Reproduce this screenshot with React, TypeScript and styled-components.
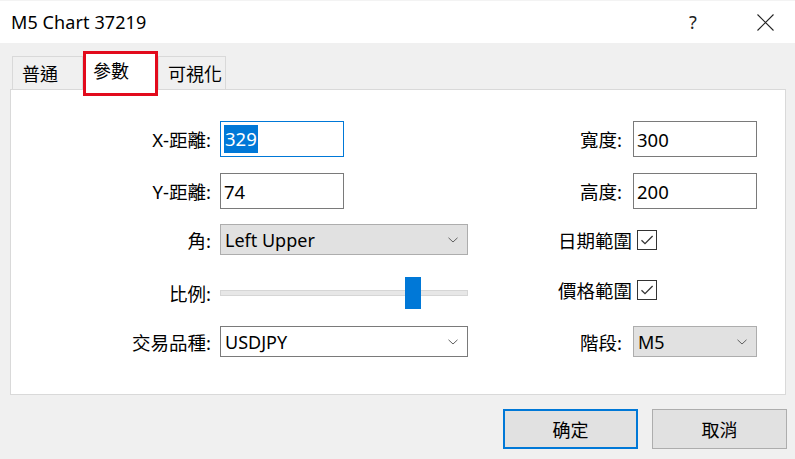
import React from "react";
import styled, { createGlobalStyle } from "styled-components";

const GlobalStyle = createGlobalStyle`
  html, body {
    margin: 0;
    padding: 0;
    background: #f0f0f0;
  }
  body {
    font-family: "Noto Sans", "Noto Sans CJK TC", sans-serif;
    color: #000;
  }
`;

const Window = styled.div`
  width: 795px;
  height: 459px;
  background: #f0f0f0;
  display: flex;
  flex-direction: column;
  overflow: hidden;
`;

const TitleBar = styled.div`
  height: 43px;
  background: #fff;
  border-top: 1px solid #f3f3f3;
  box-sizing: border-box;
  display: flex;
  align-items: center;
  padding-left: 11px;
`;

const Title = styled.div`
  flex: 1;
  font-size: 18px;
  letter-spacing: 0.1px;
`;

const TitleButton = styled.div<{ $w: number }>`
  width: ${(p) => p.$w}px;
  height: 42px;
  display: flex;
  align-items: center;
  justify-content: center;
  font-size: 18px;
  color: #222;
`;

const Body = styled.div`
  flex: 1;
  padding: 8px 10px 0 10px;
  display: flex;
  flex-direction: column;
`;

const TabRow = styled.div`
  display: flex;
  align-items: flex-end;
  height: 38px;
  padding-left: 2px;
  position: relative;
  z-index: 2;
`;

const Tab = styled.div<{ $w: number; $active?: boolean }>`
  width: ${(p) => p.$w}px;
  box-sizing: border-box;
  font-size: 18px;
  display: flex;
  align-items: center;
  ${(p) =>
    p.$active
      ? `
    height: 45px;
    margin-bottom: -7px;
    background: #fff;
    border: 3px solid #e20a1c;
    padding: 0 0 8px 7px;
  `
      : `
    height: 33px;
    background: #f0f0f0;
    border: 1px solid #d9d9d9;
    border-bottom: none;
    padding: 0 0 0 9px;
  `}
`;

const Panel = styled.div`
  height: 306px;
  box-sizing: border-box;
  background: #fff;
  border: 1px solid #d9d9d9;
  width: 776px;
  padding: 23px 28px 0 0;
  display: grid;
  grid-template-columns: 200px 248px 1fr 124px;
  grid-template-rows: 52px 52px 45px 62px 35px;
  column-gap: 9px;
  align-items: center;
  align-content: start;
  position: relative;
  z-index: 1;
`;

const Label = styled.div<{ $pad?: number; $shift?: number }>`
  font-size: 18.5px;
  text-align: right;
  margin-right: ${(p) => p.$pad ?? 0}px;
  margin-top: ${(p) => p.$shift ?? 0}px;
  white-space: nowrap;
`;

const TextBox = styled.div<{ $focus?: boolean }>`
  width: 124px;
  height: 36px;
  box-sizing: border-box;
  border: 1px solid ${(p) => (p.$focus ? "#0078d7" : "#7a7a7a")};
  background: #fff;
  font-size: 18.5px;
  display: flex;
  align-items: center;
  padding-left: 3px;
`;

const Selected = styled.span`
  background: #0078d7;
  color: #fff;
  padding: 0 1px;
  line-height: 28px;
`;

const Select = styled.div<{ $flat?: boolean }>`
  height: 31px;
  box-sizing: border-box;
  border: 1px solid ${(p) => (p.$flat ? "#7a7a7a" : "#adadad")};
  background: ${(p) => (p.$flat ? "#fff" : "#e1e1e1")};
  font-size: 18px;
  display: flex;
  align-items: center;
  justify-content: space-between;
  padding: 0 9px 0 4px;
`;

const Chevron = () => (
  <svg width="10" height="6" viewBox="0 0 10 6">
    <path d="M0.5 0.8 L5 5 L9.5 0.8" fill="none" stroke="#606060" strokeWidth="1" />
  </svg>
);

const SliderWrap = styled.div`
  position: relative;
  height: 32px;
  display: flex;
  align-items: center;
`;

const Track = styled.div`
  width: 100%;
  height: 6px;
  box-sizing: border-box;
  background: #e7e7e7;
  border: 1px solid #d6d6d6;
`;

const Thumb = styled.div`
  position: absolute;
  top: 0;
  width: 16px;
  height: 32px;
  background: #0078d7;
`;

const CheckBox = styled.div<{ $shift?: number }>`
  width: 20px;
  height: 20px;
  box-sizing: border-box;
  border: 1px solid #333;
  margin-left: 4px;
  margin-top: ${(p) => p.$shift ?? 0}px;
  display: flex;
  align-items: center;
  justify-content: center;
`;

const Check = () => (
  <svg width="14" height="12" viewBox="0 0 14 12">
    <path d="M1.5 6.2 L5 9.6 L12.6 2" fill="none" stroke="#333" strokeWidth="1.3" />
  </svg>
);

const Footer = styled.div`
  display: flex;
  justify-content: flex-end;
  gap: 14px;
  padding-top: 14px;
  margin-right: -2px;
`;

const Button = styled.div<{ $primary?: boolean }>`
  width: 135px;
  height: 40px;
  box-sizing: border-box;
  background: #e1e1e1;
  border: ${(p) => (p.$primary ? "2px solid #0078d7" : "1px solid #adadad")};
  font-size: 18px;
  display: flex;
  align-items: center;
  justify-content: center;
`;

export default function App() {
  const thumbLeft = ((405 - 220) / (468 - 220)) * 100;
  return (
    <Window>
      <GlobalStyle />
      <TitleBar>
        <Title>M5 Chart 37219</Title>
        <TitleButton $w={84}>?</TitleButton>
        <TitleButton $w={60}>
          <svg width="17" height="17" viewBox="0 0 17 17">
            <path d="M0.5 0.5 L16.5 16.5 M16.5 0.5 L0.5 16.5" stroke="#222" strokeWidth="1.1" />
          </svg>
        </TitleButton>
      </TitleBar>
      <Body>
        <TabRow>
          <Tab $w={71}>普通</Tab>
          <Tab $w={75} $active>參數</Tab>
          <Tab $w={68}>可視化</Tab>
        </TabRow>
        <Panel>
          <Label>X-距離:</Label>
          <TextBox $focus>
            <Selected>329</Selected>
          </TextBox>
          <Label $pad={2}>寬度:</Label>
          <TextBox>300</TextBox>

          <Label>Y-距離:</Label>
          <TextBox>74</TextBox>
          <Label $pad={2}>高度:</Label>
          <TextBox>200</TextBox>

          <Label>角:</Label>
          <Select>
            <span>Left Upper</span>
            <Chevron />
          </Select>
          <Label $pad={-8}>日期範圍</Label>
          <CheckBox>
            <Check />
          </CheckBox>

          <Label>比例:</Label>
          <SliderWrap>
            <Track />
            <Thumb style={{ left: `${thumbLeft}%` }} />
          </SliderWrap>
          <Label $pad={-8} $shift={-6}>價格範圍</Label>
          <CheckBox $shift={-6}>
            <Check />
          </CheckBox>

          <Label>交易品種:</Label>
          <Select $flat>
            <span>USDJPY</span>
            <Chevron />
          </Select>
          <Label $pad={2}>階段:</Label>
          <Select>
            <span>M5</span>
            <Chevron />
          </Select>
        </Panel>
        <Footer>
          <Button $primary>确定</Button>
          <Button>取消</Button>
        </Footer>
      </Body>
    </Window>
  );
}
